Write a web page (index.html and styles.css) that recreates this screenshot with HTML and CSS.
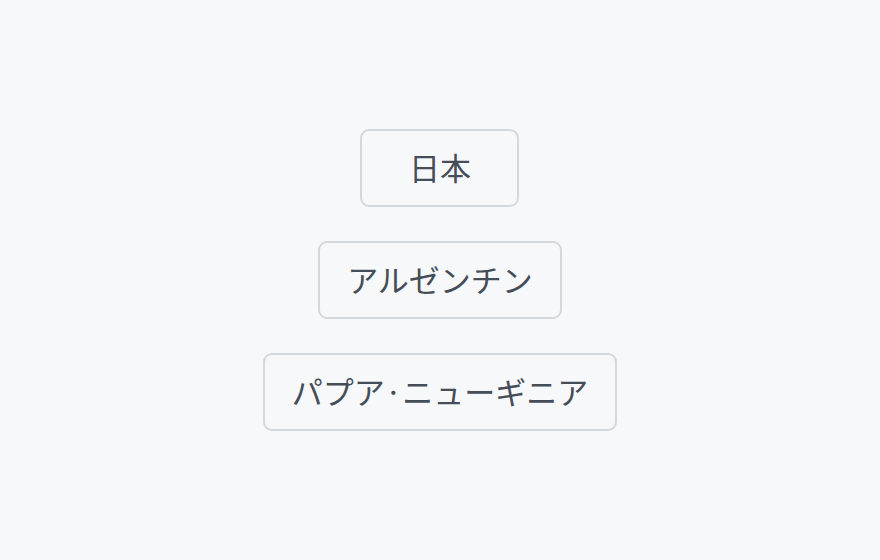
FILE: index.html
```html
<!DOCTYPE html>
<html lang="ja">
<head>
    <meta charset="utf-8">
    <title>国名</title>
    <link rel="stylesheet" href="styles.css">
</head>
<body>
    <div class="country-list">
        <button class="country">日本</button>
        <button class="country">アルゼンチン</button>
        <button class="country">パプア·ニューギニア</button>
    </div>
</body>
</html>
```

FILE: styles.css
```css
html, body {
    height: 100%;
}

body {
    margin: 0;
    background-color: #f7f8fa;
    font-family: "Noto Sans CJK JP", "Noto Sans", sans-serif;
    display: flex;
    justify-content: center;
    align-items: center;
}

.country-list {
    display: flex;
    flex-direction: column;
    align-items: center;
    gap: 34px;
}

.country {
    font-family: inherit;
    font-size: 31px;
    line-height: 44px;
    color: #454d58;
    background-color: #f7f8fa;
    border: 2px solid #d3d8df;
    border-radius: 9px;
    padding: 14px 27px 16px;
    min-width: 159px;
    box-sizing: border-box;
    cursor: pointer;
}
```
